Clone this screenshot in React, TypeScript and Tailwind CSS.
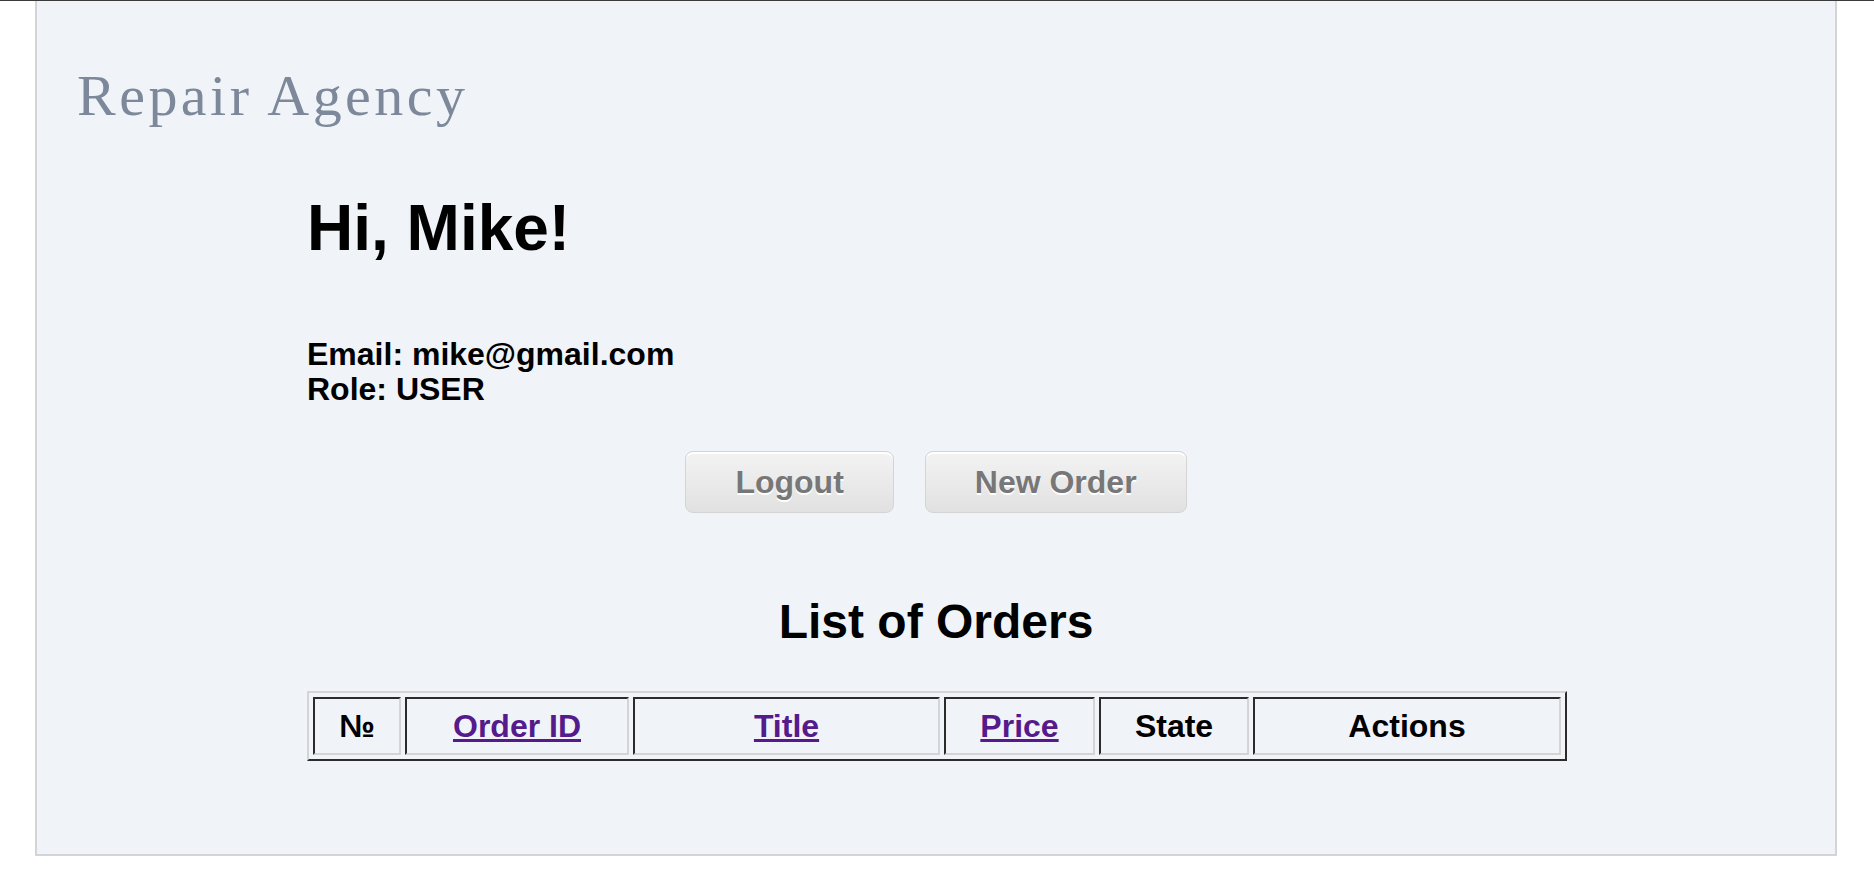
import React from 'react'

const columns: { label: string; link: boolean; width: string }[] = [
  { label: '№', link: false, width: 'w-[88px]' },
  { label: 'Order ID', link: true, width: 'w-[224px]' },
  { label: 'Title', link: true, width: 'w-[307px]' },
  { label: 'Price', link: true, width: 'w-[151px]' },
  { label: 'State', link: false, width: 'w-[150px]' },
  { label: 'Actions', link: false, width: 'w-[308px]' },
]

function GrayButton({ children }: { children: React.ReactNode }) {
  return (
    <button
      type="button"
      className="rounded-[8px] border border-[#d4d4d4] bg-gradient-to-b from-[#f3f3f3] to-[#e1e1e1] px-[49px] py-[12px] text-[32px] leading-[36px] font-bold text-[#777777] shadow-[inset_0_2px_0_#ffffff] [text-shadow:0_2px_0_#ffffff]"
    >
      {children}
    </button>
  )
}

export default function App() {
  return (
    <div className="min-h-screen bg-white font-['Liberation_Sans',Arial,sans-serif] text-black">
      <div className="h-px w-full bg-[#3a3a3a]" />
      <div className="ml-[35px] mr-[37px] border-x-2 border-b-2 border-[#d2d4d7] bg-[#f0f4f9] pt-[66px] pb-[93px]">
        <div className="pl-[40px] font-['Liberation_Serif',serif] text-[58px] leading-[57px] tracking-[0.06em] text-[#7d899a]">
          Repair Agency
        </div>

        <div className="px-[270px]">
          <h1 className="mt-[67px] text-[64px] leading-[74px] font-bold">Hi, Mike!</h1>

          <div className="mt-[72px] text-[32px] leading-[35px] font-bold">
            <div>Email: mike@gmail.com</div>
            <div>Role: USER</div>
          </div>

          <div className="mt-[44px] flex justify-center gap-[31px]">
            <GrayButton>Logout</GrayButton>
            <GrayButton>New Order</GrayButton>
          </div>

          <h2 className="mt-[81px] text-center text-[48px] leading-[55px] font-bold">List of Orders</h2>

          <table className="mt-[42px] w-[1258px] table-fixed border-separate border-spacing-[4px] border-2 border-t-[#d4d4d4] border-l-[#d4d4d4] border-r-[#2b2b2b] border-b-[#2b2b2b]">
            <thead>
              <tr>
                {columns.map((col) => (
                  <th
                    key={col.label}
                    className={`${col.width} border-2 border-t-[#2b2b2b] border-l-[#2b2b2b] border-r-[#d4d4d4] border-b-[#d4d4d4] py-[8px] text-center text-[32px] leading-[38px] font-bold`}
                  >
                    {col.link ? (
                      <a href="#" className="text-[#551a8b] underline">
                        {col.label}
                      </a>
                    ) : (
                      col.label
                    )}
                  </th>
                ))}
              </tr>
            </thead>
          </table>
        </div>
      </div>
    </div>
  )
}
